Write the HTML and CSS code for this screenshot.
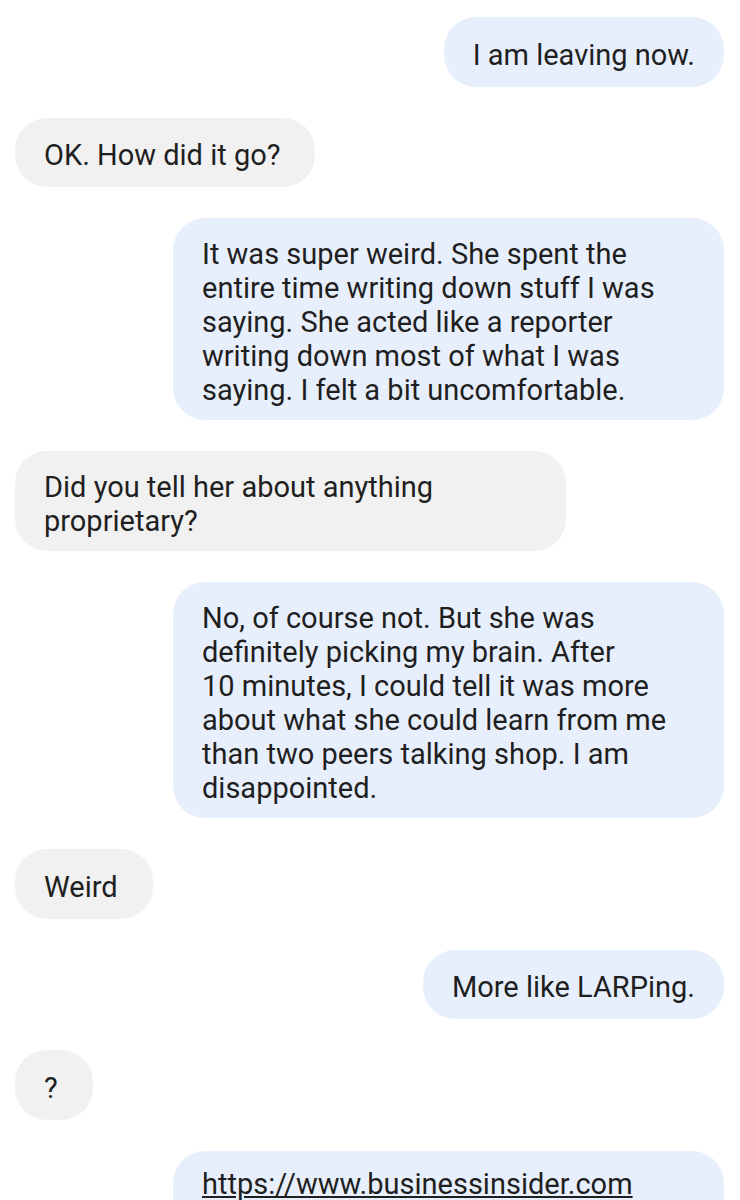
FILE: index.html
```html
<!DOCTYPE html>
<html lang="en">
<head>
    <meta charset="UTF-8">
    <meta name="viewport" content="width=device-width, initial-scale=1.0">
    <title>Messages</title>
    <link rel="stylesheet" href="styles.css">
</head>
<body>
    <div class="thread">
        <div class="msg sent">I am leaving now.</div>
        <div class="msg received">OK. How did it go?</div>
        <div class="msg sent">It was super weird. She spent the entire time writing down stuff I was saying. She acted like a reporter writing down most of what I was saying. I felt a bit uncomfortable.</div>
        <div class="msg received">Did you tell her about anything proprietary?</div>
        <div class="msg sent">No, of course not. But she was definitely picking my brain. After 10&nbsp;minutes, I could tell it was more about what she could learn from me than two peers talking shop. I am disappointed.</div>
        <div class="msg received">Weird</div>
        <div class="msg sent">More like LARPing.</div>
        <div class="msg received">?</div>
        <div class="msg sent wide"><a href="#">https://www.businessinsider.com</a></div>
    </div>
</body>
</html>
```

FILE: styles.css
```css
/* Page */
body {
    margin: 0;
    padding: 0;
    background-color: #ffffff;
    font-family: Roboto, "Noto Sans", Arial, sans-serif;
    color: #1f1f1f;
}

/* Conversation column */
.thread {
    display: flex;
    flex-direction: column;
    gap: 31px;
    padding: 17px 16px 40px 15px;
}

/* Bubbles */
.msg {
    box-sizing: border-box;
    display: flex;
    flex-direction: column;
    justify-content: center;
    max-width: 551px;
    min-height: 69.5px;
    padding: 19px 29px 13px 29px;
    font-size: 29px;
    line-height: 34px;
    border-radius: 32px;
}

.sent {
    align-self: flex-end;
    background-color: #e8effc;
}

.received {
    align-self: flex-start;
    padding-right: 35px;
    background-color: #f1f1f1;
}

/* Link preview bubble, runs past the bottom of the screen */
.wide {
    width: 551px;
    min-height: 120px;
    padding-top: 16px;
    justify-content: flex-start;
}

.msg a {
    color: #1f1f1f;
    text-decoration: underline;
    text-underline-offset: 2px;
}
```
